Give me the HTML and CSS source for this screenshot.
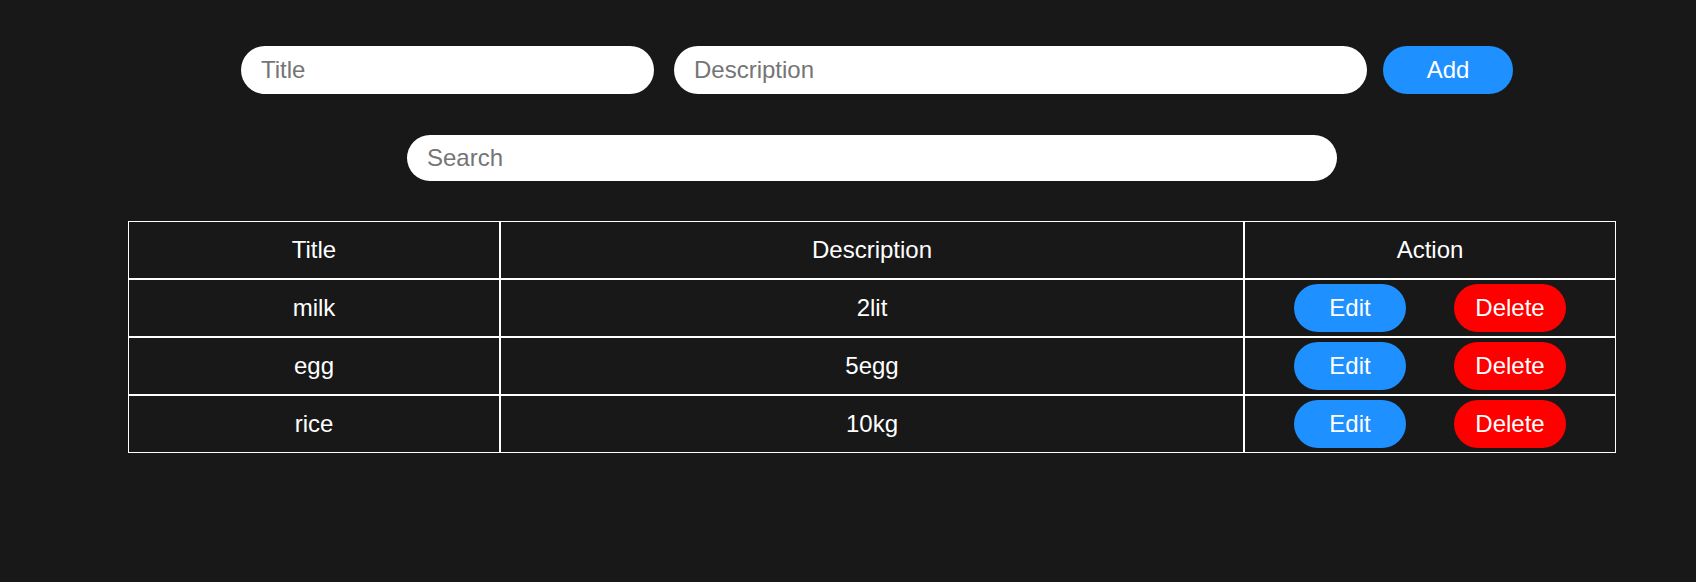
FILE: index.html
```html
<!DOCTYPE html>
<html lang="en">
<head>
<meta charset="utf-8">
<title>Todo</title>
<link rel="stylesheet" href="styles.css">
</head>
<body>
<div class="app">
  <div class="form-row">
    <input class="field field-title" type="text" placeholder="Title">
    <input class="field field-desc" type="text" placeholder="Description">
    <button class="btn btn-add">Add</button>
  </div>
  <div class="search-row">
    <input class="field field-search" type="text" placeholder="Search">
  </div>
  <div class="table-row">
    <table class="list">
      <thead>
        <tr>
          <th class="col-title">Title</th>
          <th class="col-desc">Description</th>
          <th class="col-action">Action</th>
        </tr>
      </thead>
      <tbody>
        <tr>
          <td>milk</td>
          <td>2lit</td>
          <td><div class="actions"><button class="btn btn-edit">Edit</button><button class="btn btn-delete">Delete</button></div></td>
        </tr>
        <tr>
          <td>egg</td>
          <td>5egg</td>
          <td><div class="actions"><button class="btn btn-edit">Edit</button><button class="btn btn-delete">Delete</button></div></td>
        </tr>
        <tr>
          <td>rice</td>
          <td>10kg</td>
          <td><div class="actions"><button class="btn btn-edit">Edit</button><button class="btn btn-delete">Delete</button></div></td>
        </tr>
      </tbody>
    </table>
  </div>
</div>
</body>
</html>
```

FILE: styles.css
```css
html, body {
  margin: 0;
  padding: 0;
  background: #181818;
}

body {
  font-family: "Liberation Sans", Arial, sans-serif;
  color: #ffffff;
  height: 582px;
  overflow: hidden;
}

.app {
  padding-top: 46px;
}

.form-row {
  display: flex;
  align-items: center;
  padding-left: 241px;
}

.field {
  box-sizing: border-box;
  border: none;
  outline: none;
  background: #ffffff;
  border-radius: 24px;
  height: 48px;
  padding: 0 20px;
  font-family: "Liberation Sans", Arial, sans-serif;
  font-size: 24px;
  color: #222222;
}

.field::placeholder {
  color: #757575;
}

.field-title {
  width: 413px;
  margin-right: 20px;
}

.field-desc {
  width: 693px;
  margin-right: 16px;
}

.btn {
  box-sizing: border-box;
  border: none;
  border-radius: 24px;
  height: 48px;
  width: 112px;
  padding: 0;
  font-family: "Liberation Sans", Arial, sans-serif;
  font-size: 24px;
  color: #ffffff;
  cursor: pointer;
}

.btn-add {
  width: 130px;
  background: #1e90ff;
}

.btn-edit {
  background: #1e90ff;
}

.btn-delete {
  background: #ff0000;
}

.search-row {
  padding-left: 407px;
  margin-top: 41px;
}

.field-search {
  width: 930px;
  height: 46px;
}

.table-row {
  padding-left: 128px;
  margin-top: 40px;
}

.list {
  width: 1488px;
  border-collapse: separate;
  border-spacing: 0;
  table-layout: fixed;
  font-size: 24px;
}

.list tr {
  height: 58px;
}

.list th,
.list td {
  border: 1px solid #ffffff;
  padding: 4px 0;
  text-align: center;
  vertical-align: middle;
  font-weight: normal;
}

.col-title {
  width: 370px;
}

.col-desc {
  width: 742px;
}

.col-action {
  width: 370px;
}

.actions {
  display: flex;
  justify-content: center;
  gap: 48px;
}
```
